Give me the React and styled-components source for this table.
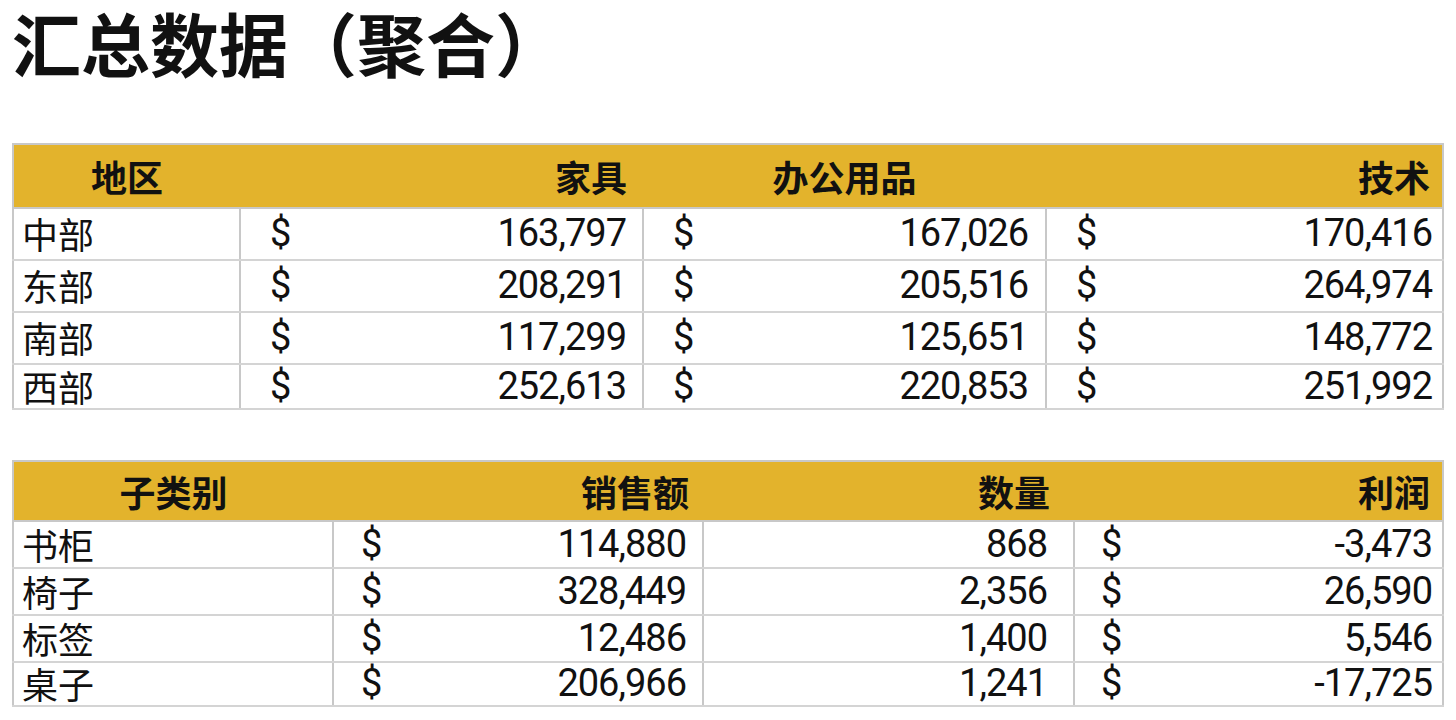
import React from "react"
import styled, { createGlobalStyle } from "styled-components"

const GlobalStyle = createGlobalStyle`
    body {
        margin: 0;
        background: #ffffff;
        color: #111111;
        font-family: Roboto, "Noto Sans CJK SC", sans-serif;
    }
`

const Page = styled.div`
    padding: 0 0 0 12px;
    width: 1456px;
    box-sizing: border-box;
`

const Title = styled.h1`
    margin: 0;
    height: 143px;
    font-family: "Noto Sans CJK SC", sans-serif;
    font-size: 69px;
    font-weight: 700;
    line-height: 84px;
    white-space: nowrap;
`

const Sheet = styled.table`
    width: 1430px;
    border-collapse: collapse;
    table-layout: fixed;
    border: 2px solid #c8c8c8;
    margin-bottom: ${(props) => props.$gap || 0}px;
`

const Head = styled.th`
    height: ${(props) => props.$h}px;
    padding: 0 ${(props) => props.$pr || 14}px 0 0;
    background: #e3b32c;
    font-family: "Noto Sans CJK SC", sans-serif;
    font-size: 36px;
    font-weight: 700;
    text-align: ${(props) => props.$align || "right"};
    ${(props) => props.$align === "center" && `padding: 0;`}
    border-bottom: 2px solid #c8c8c8;
`

const Label = styled.td`
    height: ${(props) => props.$h}px;
    padding: 0 0 0 8px;
    font-family: "Noto Sans CJK SC", sans-serif;
    font-size: 36px;
    line-height: 1.1;
    border-right: 2px solid #c8c8c8;
    border-bottom: 2px solid #d4d4d4;
`

const Cell = styled.td`
    padding: 0 ${(props) => props.$pr || 16}px 0 ${(props) => props.$pl || 29}px;
    border-right: 2px solid #c8c8c8;
    border-bottom: 2px solid #d4d4d4;
`

const Money = styled.div`
    display: flex;
    justify-content: space-between;
    align-items: center;
    font-family: Roboto, sans-serif;
    font-size: 38px;
    letter-spacing: -1px;
    line-height: 1.1;
`

const Dollar = styled.span`
    letter-spacing: 0;
`

const regions = [
    ["中部", "163,797", "167,026", "170,416"],
    ["东部", "208,291", "205,516", "264,974"],
    ["南部", "117,299", "125,651", "148,772"],
    ["西部", "252,613", "220,853", "251,992"],
]

const subs = [
    ["书柜", "114,880", "868", "-3,473"],
    ["椅子", "328,449", "2,356", "26,590"],
    ["标签", "12,486", "1,400", "5,546"],
    ["桌子", "206,966", "1,241", "-17,725"],
]

const Amount = ({ value, sign = true }) => (
    <Money>
        {sign ? <Dollar>$</Dollar> : <span />}
        <span>{value}</span>
    </Money>
)

const App = () => {
    return (
        <Page>
            <GlobalStyle />
            <Title>汇总数据（聚合）</Title>

            <Sheet $gap={50}>
                <colgroup>
                    <col style={{ width: 227 }} />
                    <col style={{ width: 403 }} />
                    <col style={{ width: 403 }} />
                    <col style={{ width: 397 }} />
                </colgroup>
                <thead>
                    <tr>
                        <Head $h={62} $align="center">地区</Head>
                        <Head $h={62} $pr={16}>家具</Head>
                        <Head $h={62} $align="center">办公用品</Head>
                        <Head $h={62} $pr={12}>技术</Head>
                    </tr>
                </thead>
                <tbody>
                    {regions.map((r, i) => (
                        <tr key={r[0]}>
                            <Label $h={i === 3 ? 43 : 50}>{r[0]}</Label>
                            <Cell><Amount value={r[1]} /></Cell>
                            <Cell $pr={17}><Amount value={r[2]} /></Cell>
                            <Cell $pr={10}><Amount value={r[3]} /></Cell>
                        </tr>
                    ))}
                </tbody>
            </Sheet>

            <Sheet>
                <colgroup>
                    <col style={{ width: 320 }} />
                    <col style={{ width: 370 }} />
                    <col style={{ width: 371 }} />
                    <col style={{ width: 369 }} />
                </colgroup>
                <thead>
                    <tr>
                        <Head $h={58} $align="center">子类别</Head>
                        <Head $h={58} $pr={14}>销售额</Head>
                        <Head $h={58} $pr={24}>数量</Head>
                        <Head $h={58} $pr={12}>利润</Head>
                    </tr>
                </thead>
                <tbody>
                    {subs.map((r, i) => (
                        <tr key={r[0]}>
                            <Label $h={i === 3 ? 41 : 45}>{r[0]}</Label>
                            <Cell $pl={27}><Amount value={r[1]} /></Cell>
                            <Cell $pr={26}><Amount value={r[2]} sign={false} /></Cell>
                            <Cell $pl={26} $pr={10}><Amount value={r[3]} /></Cell>
                        </tr>
                    ))}
                </tbody>
            </Sheet>
        </Page>
    )
}

export default App
